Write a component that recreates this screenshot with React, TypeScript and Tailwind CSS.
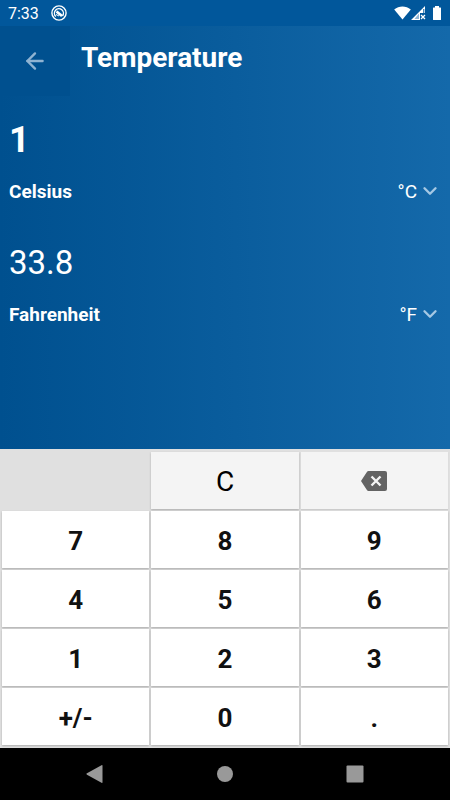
import React, { useState } from 'react';
import { ArrowLeft, ChevronDown } from 'lucide-react';
import clsx from 'clsx';

type Unit = 'C' | 'F';

const UNITS: Record<Unit, { name: string; symbol: string }> = {
  C: { name: 'Celsius', symbol: '°C' },
  F: { name: 'Fahrenheit', symbol: '°F' },
};

const KEYS = ['7', '8', '9', '4', '5', '6', '1', '2', '3', '+/-', '0', '.'];

const convert = (value: string, from: Unit, to: Unit) => {
  const n = Number(value) || 0;
  if (from === to) return String(n);
  const result = from === 'C' ? (n * 9) / 5 + 32 : ((n - 32) * 5) / 9;
  return String(Number(result.toFixed(4)));
};

const StatusBar: React.FC = () => (
  <div className="flex h-[26px] items-center justify-between bg-[#01579b] pr-2 pl-2 text-white">
    <div className="flex items-center gap-3">
      <span className="pt-[2px] text-base leading-6">7:33</span>
      <svg width="16" height="16" viewBox="0 0 16 16" fill="none" stroke="currentColor">
        <circle cx="8" cy="8" r="7.1" strokeWidth="1.4" />
        <path d="M4.800 11.500A4.500 4.500 0 1 1 11.500 11" strokeWidth="1.4" />
        <path d="M5.500 6.500l5.500 4.500" strokeWidth="2.8" />
        <path d="M5 9.500l3 1.500" strokeWidth="1" />
      </svg>
    </div>
    <div className="flex items-center">
      <svg width="17" height="14" viewBox="0 0 17 14" fill="currentColor">
        <path d="M8.500 13.500L.2 3.500C5 -.6 12 -.6 16.800 3.500z" />
      </svg>
      <svg width="15" height="14" viewBox="0 0 15 14">
        <path d="M0 14L14 0V7H9V14z" fill="currentColor" />
        <path d="M8 7.500V13H3.500z" fill="#8fb5d5" />
        <path d="M12.800 3V7" stroke="#01579b" />
        <path d="M10 9l4 4M14 9l-4 4" stroke="currentColor" strokeWidth="1.3" />
      </svg>
      <svg className="ml-[6px]" width="10" height="14" viewBox="0 0 10 14" fill="currentColor">
        <path d="M3 0h4v1.500h1.500q.5 0 .5.500v11.500q0 .5-.5.500h-7q-.5 0-.5-.500V2q0-.5.5-.5H3z" />
      </svg>
    </div>
  </div>
);

interface UnitRowProps {
  id: string;
  value: string;
  unit: Unit;
  active?: boolean;
  onUnitChange: (unit: Unit) => void;
}

const UnitRow: React.FC<UnitRowProps> = ({ id, value, unit, active, onUnitChange }) => (
  <div className="h-[123px] pt-5 pr-3 pl-[9px]">
    <output
      className={clsx('block h-12 leading-[48px]', active ? 'text-[36px] font-bold' : 'text-[33px]')}
    >
      {value}
    </output>
    <div className="mt-3 flex h-8 items-center justify-between">
      <label htmlFor={id} className="text-[19px] font-bold">
        {UNITS[unit].name}
      </label>
      <div className="relative">
        <select
          id={id}
          value={unit}
          onChange={(e) => onUnitChange(e.target.value as Unit)}
          className="w-16 appearance-none bg-transparent pr-[21px] text-[19px] outline-none [text-align-last:right]"
        >
          {Object.entries(UNITS).map(([key, u]) => (
            <option key={key} value={key} className="text-black">
              {u.symbol}
            </option>
          ))}
        </select>
        <ChevronDown
          className="pointer-events-none absolute top-[2px] -right-[3px] h-[22px] w-[22px] text-[#a5c8e4]"
          strokeWidth={2.6}
        />
      </div>
    </div>
  </div>
);

const App: React.FC = () => {
  const [value, setValue] = useState('1');
  const [from, setFrom] = useState<Unit>('C');
  const [to, setTo] = useState<Unit>('F');

  const pressKey = (key: string) => {
    setValue((v) => {
      if (key === '+/-') return v.startsWith('-') ? v.slice(1) : `-${v}`;
      if (key === '.') return v.includes('.') ? v : `${v}.`;
      return v === '0' ? key : v + key;
    });
  };

  return (
    <div className="flex min-h-screen flex-col bg-black font-[Roboto,sans-serif]">
      <StatusBar />

      <main className="flex-1 bg-linear-to-r from-[#00508f] to-[#1469aa] text-white">
        <header className="flex h-[70px]">
          <button
            aria-label="Back"
            className="flex h-[70px] w-[70px] items-center justify-center bg-[#00508f] text-[#8fb3d2]"
          >
            <ArrowLeft className="h-[26px] w-[26px]" strokeWidth={2.2} />
          </button>
          <h1 className="pt-3 pl-[11px] text-[28px] leading-10 font-bold">Temperature</h1>
        </header>

        <UnitRow id="unit-from" value={value} unit={from} active onUnitChange={setFrom} />
        <UnitRow id="unit-to" value={convert(value, from, to)} unit={to} onUnitChange={setTo} />
      </main>

      {/* Keypad */}
      <div className="grid auto-rows-[57px] grid-cols-3 gap-[2px] bg-[#e0e0e0] px-[2px] py-[3px] text-[26px] text-[#111111]">
        <div />
        <button
          className="bg-[#f4f4f4] pt-[3px] text-[28px] text-black shadow-[0_1px_2px_#aaaaaa]"
          onClick={() => setValue('0')}
        >
          C
        </button>
        <button
          aria-label="Delete"
          className="flex items-center justify-center bg-[#f4f4f4] shadow-[0_1px_1px_#cccccc]"
          onClick={() => setValue((v) => v.slice(0, -1) || '0')}
        >
          <svg width="26" height="20" viewBox="0 0 26 20">
            <path
              d="M7.500 0H24q2 0 2 2v16q0 2-2 2H7.500q-1 0-1.600-1L0 10 5.900 1q.6-1 1.600-1z"
              fill="#636363"
            />
            <path d="M10.500 5.500l9 9M19.500 5.500l-9 9" stroke="#f4f4f4" strokeWidth="2.400" />
          </svg>
        </button>
        {KEYS.map((key) => (
          <button
            key={key}
            className="bg-white pt-[3px] font-bold shadow-[0_1px_2px_#aaaaaa]"
            onClick={() => pressKey(key)}
          >
            {key}
          </button>
        ))}
      </div>

      {/* System navigation */}
      <nav className="flex h-[52px] items-center justify-center gap-[112px] text-[#999999]">
        <button aria-label="System back">
          <svg width="18" height="18" viewBox="0 0 18 18" fill="currentColor">
            <path d="M1 8.300L15.500.2q1-.5 1 .6v16.400q0 1.100-1 .6L1 9.700q-1.200-.7 0-1.400z" />
          </svg>
        </button>
        <button aria-label="Home">
          <svg width="18" height="18" viewBox="0 0 18 18" fill="currentColor">
            <circle cx="9" cy="9" r="8" />
          </svg>
        </button>
        <button aria-label="Recent apps">
          <svg width="18" height="18" viewBox="0 0 18 18" fill="currentColor">
            <rect x="0.5" y="0.5" width="17" height="17" rx="1" />
          </svg>
        </button>
      </nav>
    </div>
  );
};

export default App;
